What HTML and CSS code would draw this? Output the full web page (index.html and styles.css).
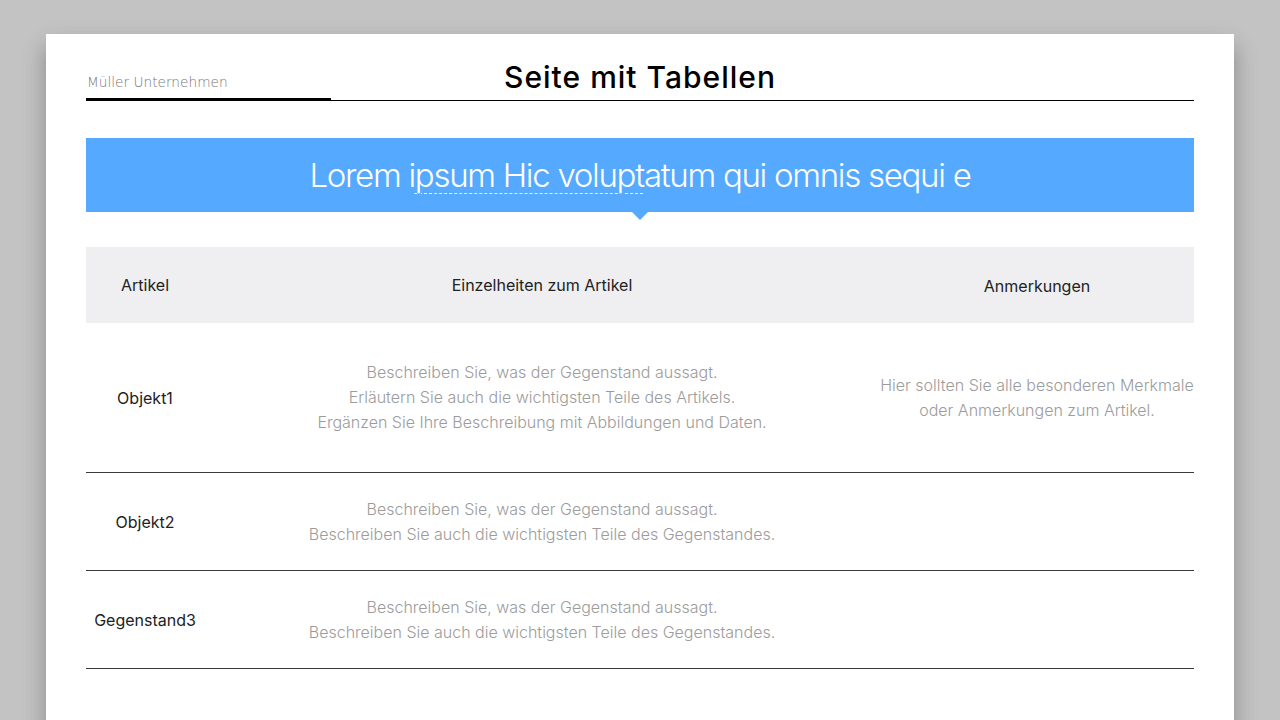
FILE: index.html
```html
<!DOCTYPE html>
<html lang="de">
<head>
<meta charset="utf-8">
<title>Seite mit Tabellen</title>
<link rel="stylesheet" href="styles.css">
</head>
<body>
<div class="page">
  <header class="header">
    <div class="company">Müller Unternehmen</div>
    <h1 class="title">Seite mit Tabellen</h1>
    <div></div>
  </header>
  <div class="banner">Lorem i<span class="marked">psum Hic volupt</span>atum qui omnis sequi e</div>
  <table class="items">
    <colgroup>
      <col class="c1"><col class="c2"><col class="c3">
    </colgroup>
    <thead>
      <tr><th>Artikel</th><th>Einzelheiten zum Artikel</th><th class="notes-h">Anmerkungen</th></tr>
    </thead>
    <tbody>
      <tr class="r1">
        <td class="name">Objekt1</td>
        <td class="desc">Beschreiben Sie, was der Gegenstand aussagt.<br>Erläutern Sie auch die wichtigsten Teile des Artikels.<br>Ergänzen Sie Ihre Beschreibung mit Abbildungen und Daten.</td>
        <td class="desc">Hier sollten Sie alle besonderen Merkmale<br>oder Anmerkungen zum Artikel.</td>
      </tr>
      <tr class="r2">
        <td class="name">Objekt2</td>
        <td class="desc">Beschreiben Sie, was der Gegenstand aussagt.<br>Beschreiben Sie auch die wichtigsten Teile des Gegenstandes.</td>
        <td class="desc"></td>
      </tr>
      <tr class="r2">
        <td class="name">Gegenstand3</td>
        <td class="desc">Beschreiben Sie, was der Gegenstand aussagt.<br>Beschreiben Sie auch die wichtigsten Teile des Gegenstandes.</td>
        <td class="desc"></td>
      </tr>
    </tbody>
  </table>
</div>
</body>
</html>
```
FILE: styles.css
```css
html, body {
  margin: 0;
  padding: 0;
  height: 100%;
  overflow: hidden;
}
body {
  background: #c3c3c4;
  font-family: Inter, "Noto Sans", sans-serif;
}
.page {
  margin: 34px 0 0 46px;
  width: 1188px;
  height: 720px;
  box-sizing: border-box;
  padding: 0 40px;
  background: #fff;
  box-shadow: 0 12px 22px rgba(0, 0, 0, 0.3);
}
.header {
  display: grid;
  grid-template-columns: 1fr auto 1fr;
  align-items: end;
  padding-top: 25px;
  border-bottom: 1px solid #000;
}
.company {
  justify-self: start;
  width: 245px;
  padding: 0 0 7px 1px;
  margin-bottom: -1px;
  border-bottom: 3px solid #000;
  font-family: "DejaVu Sans", sans-serif;
  font-weight: 200;
  font-size: 13.7px;
  line-height: 18px;
  color: #777;
  box-sizing: border-box;
}
.title {
  margin: 0 0 5px;
  font-size: 30px;
  line-height: 36px;
  font-weight: 500;
  letter-spacing: 1px;
  color: #000;
}
.banner {
  position: relative;
  margin-top: 37px;
  height: 74px;
  background: #55aaff;
  color: #fff;
  font-size: 33px;
  font-weight: 300;
  letter-spacing: -1.3px;
  line-height: 74px;
  text-align: center;
}
.banner::after {
  content: "";
  position: absolute;
  left: 50%;
  bottom: -8px;
  margin-left: -8px;
  border-left: 8px solid transparent;
  border-right: 8px solid transparent;
  border-top: 8px solid #55aaff;
}
.marked {
  text-decoration: underline dashed rgba(255, 255, 255, 0.85);
  text-decoration-thickness: 1px;
  text-underline-offset: 6px;
}
.items {
  margin-top: 35px;
  width: 100%;
  border-collapse: collapse;
  table-layout: fixed;
}
.c1 { width: 118px; }
.c2 { width: 676px; }
.c3 { width: 314px; }
.items th {
  height: 74px;
  padding: 0;
  background: #efeff1;
  font-weight: 400;
  font-size: 16px;
  color: #222;
  text-align: center;
}
.items th.notes-h { padding-top: 2px; }
.items td {
  padding: 0;
  text-align: center;
  vertical-align: middle;
  border-bottom: 1px solid #3a3a3a;
}
.r1 td { height: 149px; }
.r2 td { height: 97px; }
.name {
  font-size: 16px;
  color: #222;
}
.desc {
  font-size: 16px;
  font-weight: 300;
  line-height: 25px;
  color: #9c9c9c;
}
```
